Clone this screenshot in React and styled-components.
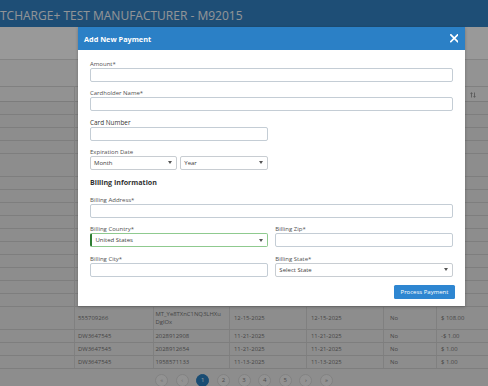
import React from 'react';
import styled, { createGlobalStyle } from 'styled-components';

const Global = createGlobalStyle`
  html, body { margin: 0; padding: 0; width: 488px; height: 386px; overflow: hidden; }
  body { font-family: "Open Sans", "Noto Sans", sans-serif; background: #ececec; }
  * { box-sizing: border-box; }
`;

const Page = styled.div`
  position: relative;
  width: 488px;
  height: 386px;
  overflow: hidden;
  background: #ececec;
`;

const TopBar = styled.header`
  height: 27px;
  background: #3282c5;
  display: flex;
  align-items: center;
  padding-top: 3px;
  color: #f2f7fc;
  font-size: 12px;
  white-space: nowrap;
`;

const Toolbar = styled.div`
  height: 33px;
  background: #ffffff;
  border-bottom: 1px solid #dcdcdc;
`;

const FilterBar = styled.div`
  height: 27px;
  background: #f6f6f6;
  border-bottom: 1px solid #d6d6d6;
`;

const COLS = '74px 79px 76px 77px 77px 53px 64px';
const PADS = [4, 3, 1.5, 4, 4, 6, 4];

const HeadRow = styled.div`
  display: grid;
  grid-template-columns: ${COLS};
  height: 15px;
  background: #f4f4f4;
  border-bottom: 1px solid #cfcfcf;
`;

const HeadCell = styled.div`
  display: flex;
  align-items: center;
  justify-content: space-between;
  padding: 2px 24px 0 ${p => p.$pad}px;
  border-left: 1px solid #d8d8d8;
  font-size: 5.8px;
  font-weight: 600;
  color: #7a7a7a;
  white-space: nowrap;
  overflow: hidden;
  &:first-child { border-left: none; }
`;

const Row = styled.div`
  display: grid;
  grid-template-columns: ${COLS};
  height: ${p => (p.$tall ? 23 : 13)}px;
  border-bottom: 1px solid #d2d2d2;
  background: #ececec;
`;

const Cell = styled.div`
  display: flex;
  align-items: center;
  padding-left: ${p => p.$pad}px;
  border-left: 1px solid #d6d6d6;
  font-size: 5.9px;
  line-height: 8px;
  color: #747474;
  white-space: nowrap;
  overflow: hidden;
  &:first-child { border-left: none; }
`;

const Pager = styled.nav`
  display: flex;
  justify-content: center;
  gap: 7.6px;
  padding-top: 4.5px;
`;

const PageDot = styled.span`
  width: 13px;
  height: 13px;
  border-radius: 50%;
  display: flex;
  align-items: center;
  justify-content: center;
  font-size: 6px;
  background: ${p => (p.$active ? '#2a7fc0' : '#f4f4f4')};
  color: ${p => (p.$active ? '#ffffff' : p.$disabled ? '#b5b5b5' : '#808080')};
  border: 1px solid ${p => (p.$active ? '#2a7fc0' : '#d8d8d8')};
`;

const Overlay = styled.div`
  position: absolute;
  inset: 0;
  background: rgba(0, 0, 0, 0.4);
`;

const Modal = styled.section`
  position: absolute;
  left: 78px;
  top: 27px;
  width: 387px;
  background: #ffffff;
  box-shadow: 0 1px 3px rgba(0, 0, 0, 0.25);
`;

const ModalHeader = styled.div`
  height: 23px;
  background: #2b80c6;
  display: flex;
  align-items: center;
  justify-content: space-between;
  padding: 0 6.7px 0 6px;
`;

const ModalTitle = styled.h2`
  margin: 0;
  font-size: 7.3px;
  font-weight: 700;
  color: #ffffff;
`;

const CloseButton = styled.button`
  border: none;
  background: none;
  padding: 0;
  width: 8.5px;
  height: 8.5px;
  display: flex;
`;

const Body = styled.div`
  padding: 9.5px 12px 7px 12px;
  display: flex;
  flex-direction: column;
  gap: 7.5px;
`;

const Field = styled.div`
  display: flex;
  flex-direction: column;
  width: ${p => (p.$half ? 'calc(50% - 3.85px)' : '100%')};
`;

const Label = styled.label`
  height: 8px;
  line-height: 8px;
  font-size: ${p => (p.$strong ? '6.4px' : '6px')};
  color: ${p => (p.$strong ? '#333333' : '#505050')};
  white-space: nowrap;
`;

const Input = styled.div`
  height: 14px;
  border: 1px solid #c4cdd5;
  border-radius: 2px;
  background: #ffffff;
`;

const SelectBox = styled.div`
  height: ${p => (p.$short ? 13.5 : 14)}px;
  border: 1px solid ${p => (p.$valid ? '#8fca8f' : '#c8cdd2')};
  border-left: ${p => (p.$valid ? '2px solid #2e7d32' : '1px solid #c8cdd2')};
  border-radius: 2px;
  display: flex;
  align-items: center;
  justify-content: space-between;
  padding: 0 4px 0 ${p => (p.$valid ? 3.5 : 3)}px;
  font-size: 6px;
  color: #3c3c3c;
  background: #ffffff;
`;

const TwoCols = styled.div`
  display: grid;
  grid-template-columns: 1fr 1fr;
  gap: ${p => p.$gap}px;
`;

const SectionTitle = styled.h3`
  margin: 0 0 1px;
  height: 10px;
  line-height: 10px;
  font-size: 7.1px;
  font-weight: 700;
  color: #333333;
`;

const SubmitButton = styled.button`
  align-self: flex-end;
  margin: 1px -2px 0 0;
  height: 14.3px;
  width: 61px;
  border: none;
  border-radius: 1.5px;
  background: #2e86d1;
  color: #ffffff;
  font-family: "Open Sans", sans-serif;
  font-size: 6px;
  padding: 0;
`;

const Arrow = () => (
  <svg width="4" height="3" viewBox="0 0 4 3">
    <path d="M0 0 H4 L2 3 Z" fill="#555" />
  </svg>
);

const SortIcon = () => (
  <svg width="6" height="6" viewBox="0 0 6 6">
    <path d="M1.5 5.5 V0.7 M0.5 1.8 L1.5 0.7 L2.5 1.8 M4.5 0.5 V5.3 M3.5 4.2 L4.5 5.3 L5.5 4.2" stroke="#8a8a8a" strokeWidth="0.8" fill="none" />
  </svg>
);

const heads = ['', 'Invoice #', 'Transaction ID', 'Invoice Date', 'Payment Date', 'Void', 'Amount'];

const hiddenRows = [
  { cells: ['DW3647545', '2028913340', '12-22-2025', '12-22-2025', 'No', '$ 1.00'] },
  { cells: ['DW3647545', '2028913301', '12-22-2025', '12-22-2025', 'No', '$ 1.00'] },
  { cells: ['DW3647545', '2028913288', '12-19-2025', '12-19-2025', 'No', '$ 2.00'] },
  { cells: ['DW3647545', '2028913270', '12-19-2025', '12-19-2025', 'No', '$ 1.00'] },
  { tall: true, cells: ['555709301', ['MT_Kd72PqLs0WnR5ZtYe', 'HqvBn'], '12-18-2025', '12-18-2025', 'No', '$ 54.00'] },
  { cells: ['DW3647545', '2028913204', '12-18-2025', '12-18-2025', 'No', '$ 5.00'] },
  { cells: ['DW3647545', '2028913187', '12-17-2025', '12-17-2025', 'No', '$ 1.00'] },
  { cells: ['DW3647545', '2028913150', '12-17-2025', '12-17-2025', 'No', '$ 1.00'] },
  { cells: ['DW3647545', '2028913122', '12-16-2025', '12-16-2025', 'No', '$ 1.00'] },
  { cells: ['DW3647545', '2028913099', '12-16-2025', '12-16-2025', 'No', '$ 3.00'] },
  { cells: ['DW3647545', '2028913061', '12-16-2025', '12-16-2025', 'No', '$ 1.00'] },
  { cells: ['DW3647545', '2028913040', '12-15-2025', '12-15-2025', 'No', '$ 1.00'] },
  { cells: ['DW3647545', '2028913017', '12-15-2025', '12-15-2025', 'No', '$ 1.00'] },
  { cells: ['DW3647545', '2028913002', '12-15-2025', '12-15-2025', 'No', '$ 1.00'] },
  { cells: ['DW3647545', '2028912990', '12-15-2025', '12-15-2025', 'No', '$ 1.00'] },
];

const visibleRows = [
  { tall: true, cells: ['555709266', ['MT_Ye8TXnC1NQ3LHXu', 'DglOx'], '12-15-2025', '12-15-2025', 'No', '$ 108.00'] },
  { cells: ['DW3647545', '2028912908', '11-21-2025', '11-21-2025', 'No', '-$ 1.00'] },
  { cells: ['DW3647545', '2028912654', '11-21-2025', '11-21-2025', 'No', '$ 1.00'] },
  { cells: ['DW3647545', '1958571133', '11-13-2025', '11-13-2025', 'No', '$ 1.00'] },
];

const renderCell = (v, i) => (
  <Cell key={i + 1} $pad={PADS[i + 1]}>
    {Array.isArray(v) ? (
      <span>
        {v[0]}
        <br />
        {v[1]}
      </span>
    ) : (
      v
    )}
  </Cell>
);

const renderRow = (r, k) => (
  <Row key={k} $tall={r.tall}>
    <Cell $pad={PADS[0]} />
    {r.cells.map(renderCell)}
  </Row>
);

export default function App() {
  return (
    <Page>
      <Global />
      <TopBar>TCHARGE+ TEST MANUFACTURER - M92015</TopBar>
      <Toolbar />
      <FilterBar />
      <HeadRow>
        {heads.map((h, i) => (
          <HeadCell key={i} $pad={PADS[i]}>
            <span>{h}</span>
            {i > 0 && <SortIcon />}
          </HeadCell>
        ))}
      </HeadRow>
      {hiddenRows.map((r, k) => renderRow(r, 'h' + k))}
      {visibleRows.map((r, k) => renderRow(r, 'v' + k))}
      <Pager>
        <PageDot $disabled>«</PageDot>
        <PageDot $disabled>‹</PageDot>
        <PageDot $active>1</PageDot>
        <PageDot>2</PageDot>
        <PageDot>3</PageDot>
        <PageDot>4</PageDot>
        <PageDot>5</PageDot>
        <PageDot>›</PageDot>
        <PageDot>»</PageDot>
      </Pager>

      <Overlay />

      <Modal>
        <ModalHeader>
          <ModalTitle>Add New Payment</ModalTitle>
          <CloseButton aria-label="Close">
            <svg width="8.5" height="8.5" viewBox="0 0 10 10">
              <path d="M1 1 L9 9 M9 1 L1 9" stroke="#ffffff" strokeWidth="2" strokeLinecap="square" />
            </svg>
          </CloseButton>
        </ModalHeader>
        <Body>
          <Field>
            <Label>Amount*</Label>
            <Input />
          </Field>
          <Field>
            <Label>Cardholder Name*</Label>
            <Input />
          </Field>
          <Field $half>
            <Label $strong>Card Number</Label>
            <Input />
          </Field>
          <Field $half>
            <Label>Expiration Date</Label>
            <TwoCols $gap={3}>
              <SelectBox $short>
                <span>Month</span>
                <Arrow />
              </SelectBox>
              <SelectBox $short>
                <span>Year</span>
                <Arrow />
              </SelectBox>
            </TwoCols>
          </Field>
          <SectionTitle>Billing Information</SectionTitle>
          <Field>
            <Label>Billing Address*</Label>
            <Input />
          </Field>
          <TwoCols $gap={7.7}>
            <Field>
              <Label>Billing Country*</Label>
              <SelectBox $valid>
                <span>United States</span>
                <Arrow />
              </SelectBox>
            </Field>
            <Field>
              <Label>Billing Zip*</Label>
              <Input />
            </Field>
          </TwoCols>
          <TwoCols $gap={7.7}>
            <Field>
              <Label>Billing City*</Label>
              <Input />
            </Field>
            <Field>
              <Label>Billing State*</Label>
              <SelectBox>
                <span>Select State</span>
                <Arrow />
              </SelectBox>
            </Field>
          </TwoCols>
          <SubmitButton>Process Payment</SubmitButton>
        </Body>
      </Modal>
    </Page>
  );
}
